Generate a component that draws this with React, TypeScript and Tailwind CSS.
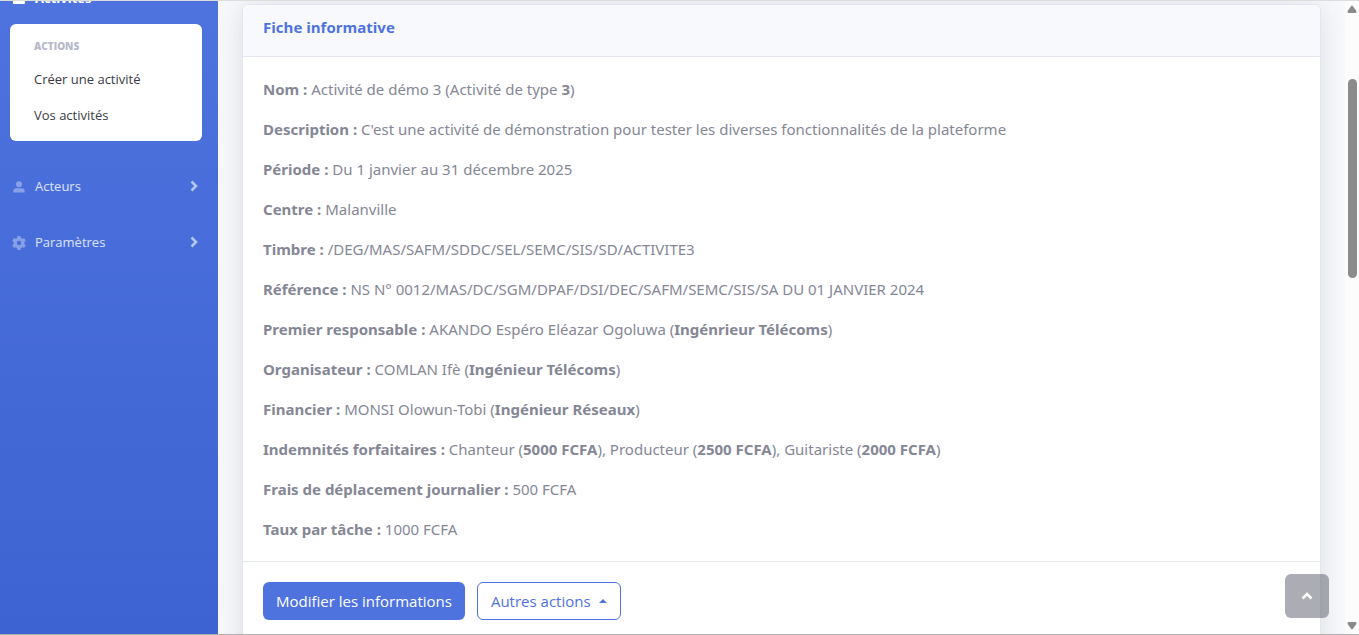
import React from "react";
import { FaCalendar } from "react-icons/fa";
import { FaGear } from "react-icons/fa6";

type Part = string | { b: string };

const fields: { label: string; parts: Part[] }[] = [
  { label: "Nom", parts: ["Activité de démo 3 (Activité de type ", { b: "3" }, ")"] },
  {
    label: "Description",
    parts: ["C'est une activité de démonstration pour tester les diverses fonctionnalités de la plateforme"],
  },
  { label: "Période", parts: ["Du 1 janvier au 31 décembre 2025"] },
  { label: "Centre", parts: ["Malanville"] },
  { label: "Timbre", parts: ["/DEG/MAS/SAFM/SDDC/SEL/SEMC/SIS/SD/ACTIVITE3"] },
  { label: "Référence", parts: ["NS N° 0012/MAS/DC/SGM/DPAF/DSI/DEC/SAFM/SEMC/SIS/SA DU 01 JANVIER 2024"] },
  { label: "Premier responsable", parts: ["AKANDO Espéro Eléazar Ogoluwa (", { b: "Ingénrieur Télécoms" }, ")"] },
  { label: "Organisateur", parts: ["COMLAN Ifè (", { b: "Ingénieur Télécoms" }, ")"] },
  { label: "Financier", parts: ["MONSI Olowun-Tobi (", { b: "Ingénieur Réseaux" }, ")"] },
  {
    label: "Indemnités forfaitaires",
    parts: [
      "Chanteur (",
      { b: "5000 FCFA" },
      "), Producteur (",
      { b: "2500 FCFA" },
      "), Guitariste (",
      { b: "2000 FCFA" },
      ")",
    ],
  },
  { label: "Frais de déplacement journalier", parts: ["500 FCFA"] },
  { label: "Taux par tâche", parts: ["1000 FCFA"] },
];

function UserIcon() {
  return (
    <svg width="12" height="12" viewBox="0 0 12 12" fill="currentColor">
      <circle cx="6" cy="3.2" r="3" />
      <path d="M.3 11.500V10.300A3 3 0 0 1 3.300 7.300H8.700A3 3 0 0 1 11.700 10.300V11.500Z" />
    </svg>
  );
}

function NavRow({ icon, label }: { icon: React.ReactNode; label: string }) {
  return (
    <a href="#" className="flex h-14 items-center pr-5 pl-3 text-[13px] text-white/80">
      <span className="flex w-3.5 justify-center text-white/35">{icon}</span>
      <span className="flex-1 pl-[9px]">{label}</span>
      <svg
        width="8"
        height="12"
        viewBox="0 0 8 12"
        className="mb-0.5 text-white/60"
        fill="none"
        stroke="currentColor"
        strokeWidth="2.6"
      >
        <path d="M1.5 1.500L6 6L1.500 10.500" />
      </svg>
    </a>
  );
}

function Sidebar() {
  return (
    <nav className="w-[218px] shrink-0 overflow-hidden bg-linear-to-b from-[#4e73df] to-[#3d63d2]">
      <a href="#" className="-mt-3 mb-[15px] flex h-5 items-center pl-3 text-[13px] font-bold text-white">
        <span className="flex w-[23px]">
          <FaCalendar size={14} className="-mt-1" />
        </span>
        Activités
      </a>
      <div className="mr-4 mb-[18px] ml-2.5 rounded-md bg-white py-2">
        <h6 className="px-6 text-[10px] leading-[29px] font-extrabold text-[#b7b9cc] uppercase">Actions</h6>
        <a href="#" className="block px-6 text-[13px] leading-9 text-[#3a3b45]">
          Créer une activité
        </a>
        <a href="#" className="block px-6 text-[13px] leading-9 text-[#3a3b45]">
          Vos activités
        </a>
      </div>
      <NavRow icon={<UserIcon />} label="Acteurs" />
      <NavRow icon={<FaGear size={14} />} label="Paramètres" />
    </nav>
  );
}

function Scrollbar() {
  return (
    <div aria-hidden="true" className="flex w-3.5 shrink-0 flex-col items-center bg-[#fcfcfc] py-1">
      <svg width="10" height="8" viewBox="0 0 10 8" className="shrink-0" fill="#8b8b8b">
        <path d="M4.2 1Q5 0 5.8 1L9.4 6Q9.7 8 8.5 8H1.500Q.3 8 .6 6Z" />
      </svg>
      <div className="flex min-h-0 w-full flex-1 flex-col items-center pt-[66px]">
        <div className="h-[199px] w-[9px] rounded-full bg-[#8b8b8b]" />
      </div>
      <svg width="10" height="8" viewBox="0 0 10 8" className="shrink-0" fill="#8b8b8b">
        <path d="M4.2 7Q5 8 5.8 7L9.4 2Q9.7 0 8.5 0H1.500Q.3 0 .6 2Z" />
      </svg>
    </div>
  );
}

export default function App() {
  return (
    <div className="flex h-screen overflow-hidden border-t border-b border-t-[#dcdddc] border-b-[#b0b0b0] bg-[#f8f9fc] font-['Open_Sans','Noto_Sans',sans-serif]">
      <Sidebar />
      <main className="relative min-w-0 flex-1 overflow-hidden px-6 pt-[3px]">
        <section className="rounded-md border border-[#e3e6f0] bg-white pb-10 shadow-[0_2px_28px_0_rgba(58,59,69,0.15)]">
          <header className="rounded-t-md border-b border-[#e3e6f0] bg-[#f8f9fc] px-5 pt-3 pb-[18px]">
            <h6 className="text-[15px] leading-[21px] font-bold text-[#4e73df]">Fiche informative</h6>
          </header>
          <div className="flex flex-col gap-4 p-5 font-['Noto_Sans','Open_Sans',sans-serif] text-[15px] leading-6 text-[#858796]">
            {fields.map((f) => (
              <p key={f.label}>
                <strong>{f.label} :</strong>{" "}
                {f.parts.map((p, i) => (typeof p === "string" ? p : <strong key={i}>{p.b}</strong>))}
              </p>
            ))}
          </div>
          <footer className="flex gap-3 border-t border-[#e3e6ea] p-5">
            <button type="button" className="h-[38px] rounded-md bg-[#4e73df] px-[13px] text-[15px] text-white">
              Modifier les informations
            </button>
            <button
              type="button"
              className="flex h-[38px] items-center gap-2 rounded-md border border-[#4e73df] px-[13px] text-[15px] text-[#4e73df]"
            >
              Autres actions
              <svg width="8" height="4" viewBox="0 0 8 4" fill="currentColor">
                <path d="M0 4L4 0L8 4Z" />
              </svg>
            </button>
          </footer>
        </section>
        <a
          href="#"
          aria-label="Haut de page"
          className="absolute right-4 bottom-4 flex size-11 items-center justify-center rounded-md bg-[#5a5c69]/50 text-white"
        >
          <svg width="12" height="8" viewBox="0 0 12 8" fill="none" stroke="currentColor" strokeWidth="2.6">
            <path d="M1.500 6.500L6 2L10.500 6.500" />
          </svg>
        </a>
      </main>
      <Scrollbar />
    </div>
  );
}
